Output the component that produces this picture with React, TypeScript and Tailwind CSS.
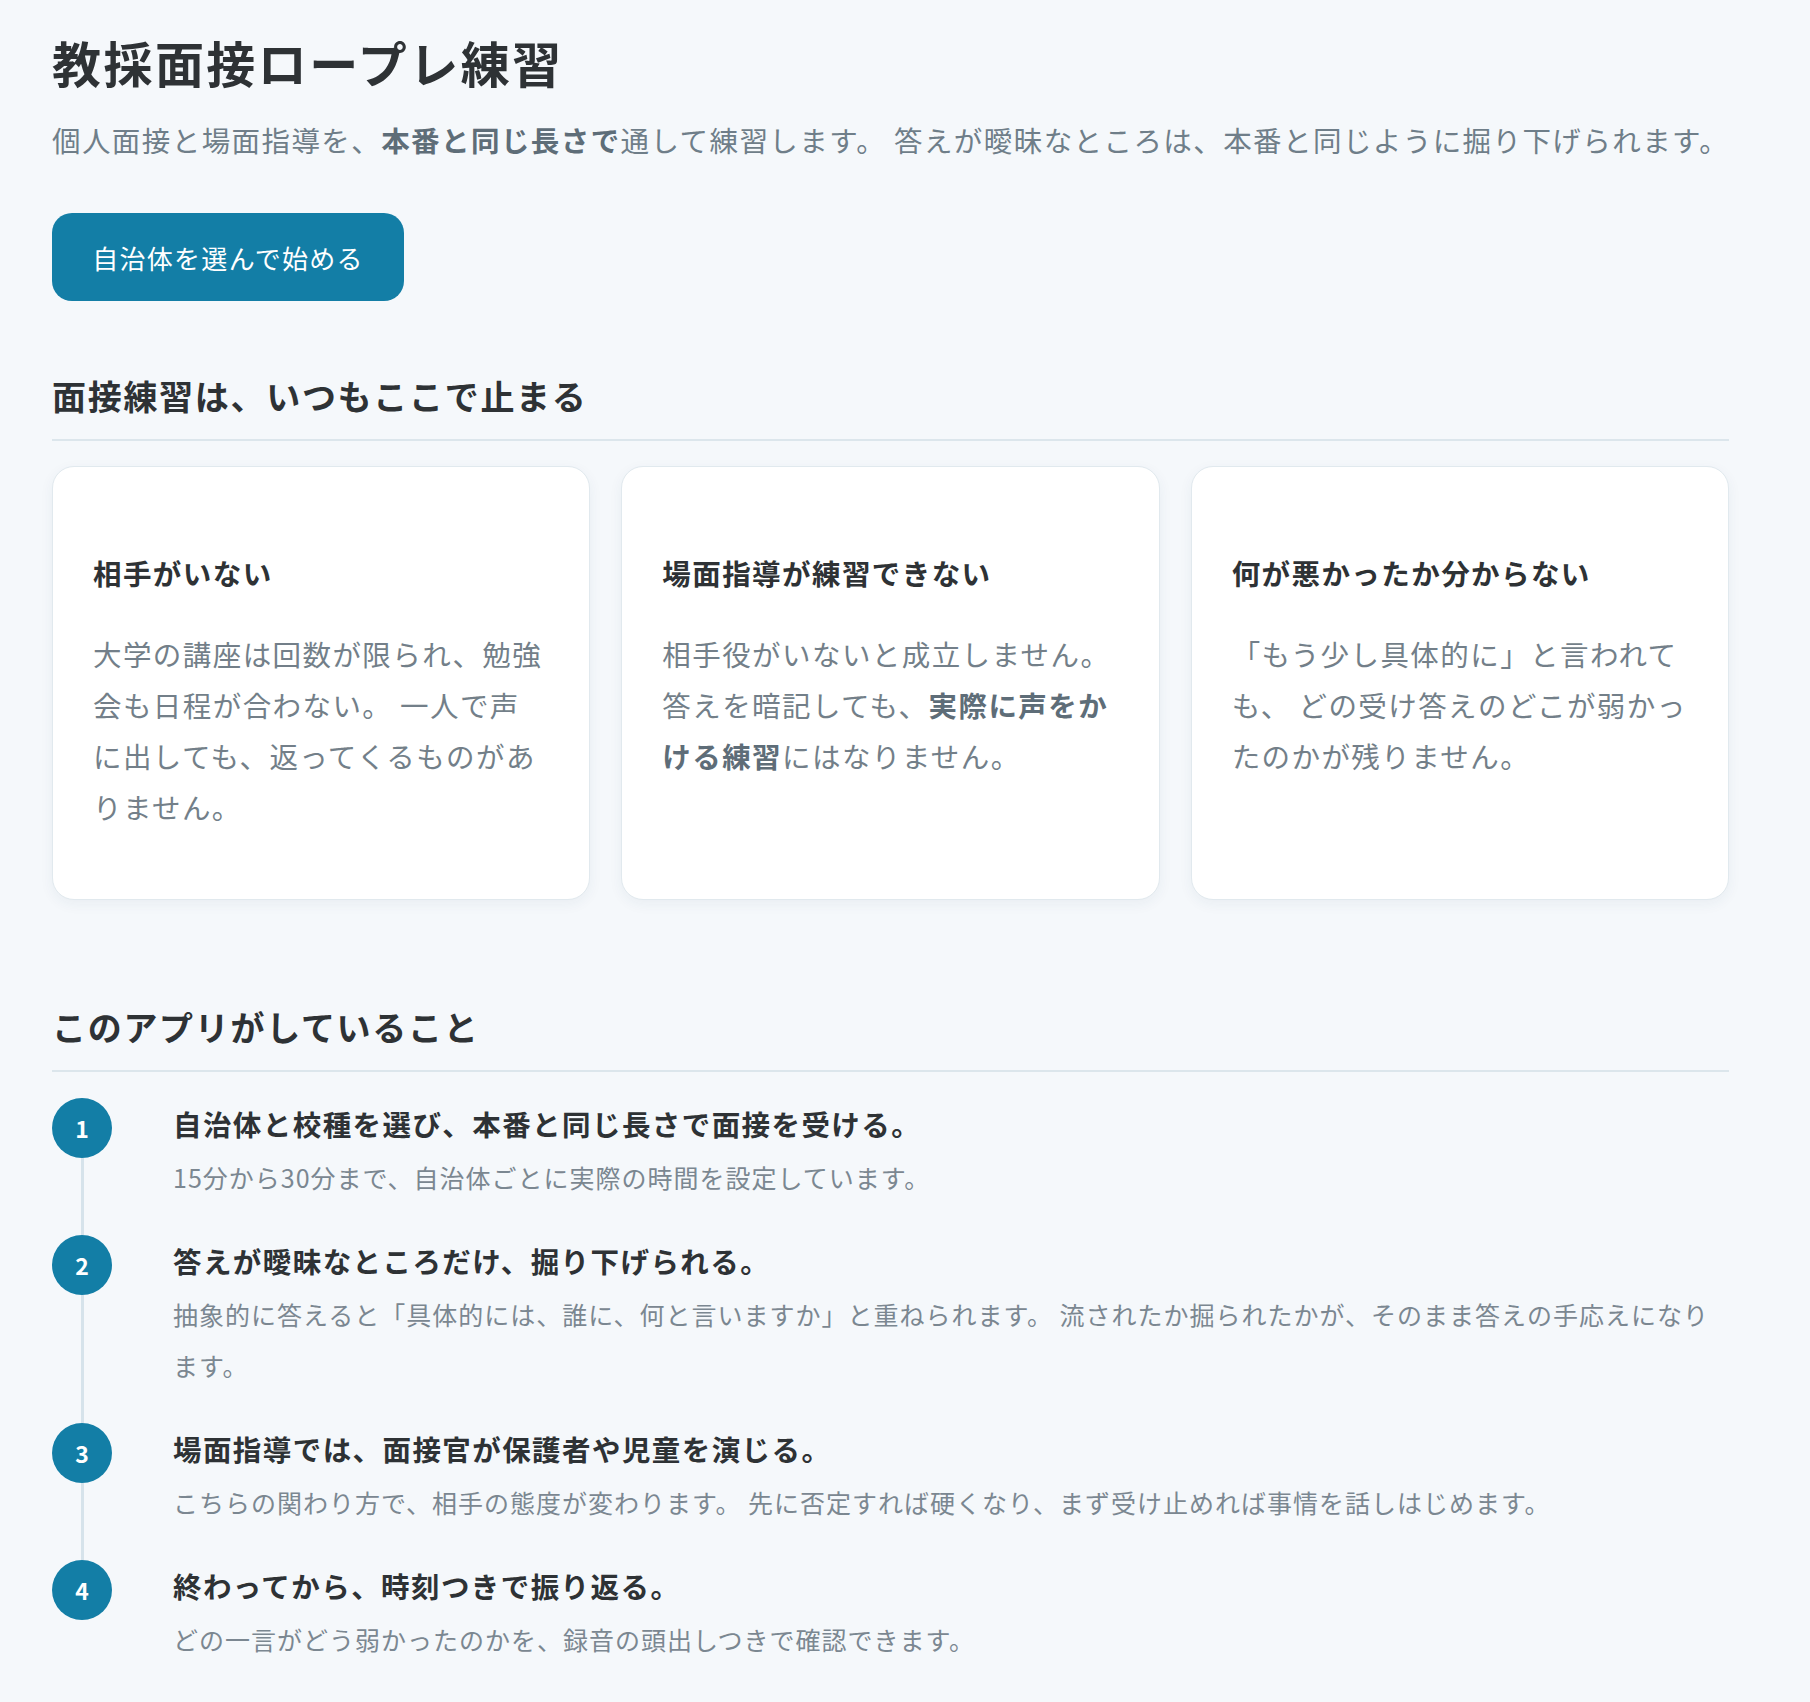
import React from 'react';

const steps = [
    {
        title: '自治体と校種を選び、本番と同じ長さで面接を受ける。',
        body: '15分から30分まで、自治体ごとに実際の時間を設定しています。',
    },
    {
        title: '答えが曖昧なところだけ、掘り下げられる。',
        body: '抽象的に答えると「具体的には、誰に、何と言いますか」と重ねられます。 流されたか掘られたかが、そのまま答えの手応えになります。',
    },
    {
        title: '場面指導では、面接官が保護者や児童を演じる。',
        body: 'こちらの関わり方で、相手の態度が変わります。 先に否定すれば硬くなり、まず受け止めれば事情を話しはじめます。',
    },
    {
        title: '終わってから、時刻つきで振り返る。',
        body: 'どの一言がどう弱かったのかを、録音の頭出しつきで確認できます。',
    },
];

const Card: React.FC<{ title: string; children: React.ReactNode }> = ({ title, children }) => (
    <div className="bg-white border border-[#e1e9ee] rounded-[22px] shadow-[0_4px_14px_rgba(30,70,100,0.06)] px-[40px] pt-[85px] pb-[67px]">
        <h3 className="text-[28.5px] leading-[42px] font-bold tracking-[0.05em] text-[#2e3235]">{title}</h3>
        <p className="mt-[34px] text-[28.5px] leading-[51px] tracking-[0.05em] text-[#737f89] whitespace-nowrap">{children}</p>
    </div>
);

const App: React.FC = () => {
    return (
        <div className="min-h-screen bg-[#f5f8fb] font-['Noto_Sans_CJK_JP',sans-serif]">
            <div className="pl-[52px] pr-[81px] pt-[30px] pb-[38px]">
                {/* hero */}
                <h1 className="text-[49px] leading-[64px] font-bold tracking-[0.05em] text-[#2e3235]">教採面接ロープレ練習</h1>
                <p className="mt-[20px] text-[28.5px] leading-[51px] tracking-[0.05em] text-[#6f7e89] whitespace-nowrap">
                    個人面接と場面指導を、<strong className="font-bold text-[#5e6d78]">本番と同じ長さで</strong>通して練習します。 答えが曖昧なところは、本番と同じように掘り下げられます。
                </p>
                <button className="block mt-[48px] h-[88px] w-[352px] rounded-[20px] bg-[#137ea6] text-white text-[26px] tracking-[0.05em]">
                    自治体を選んで始める
                </button>

                {/* problems */}
                <h2 className="mt-[69px] text-[34px] leading-[51px] font-bold tracking-[0.05em] text-[#2e3235] pb-[18px] border-b-2 border-[#dce6ec]">
                    面接練習は、いつもここで止まる
                </h2>
                <div className="mt-[25px] grid grid-cols-3 gap-[31px]">
                    <Card title="相手がいない">
                        大学の講座は回数が限られ、勉強<br />会も日程が合わない。 一人で声<br />に出しても、返ってくるものがあ<br />りません。
                    </Card>
                    <Card title="場面指導が練習できない">
                        相手役がいないと成立しません。<br />答えを暗記しても、<strong className="font-bold text-[#5e6d78]">実際に声をか<br />ける練習</strong>にはなりません。
                    </Card>
                    <Card title="何が悪かったか分からない">
                        「もう少し具体的に」と言われて<br />も、 どの受け答えのどこが弱かっ<br />たのかが残りません。
                    </Card>
                </div>

                {/* what the app does */}
                <h2 className="mt-[101px] text-[34px] leading-[51px] font-bold tracking-[0.05em] text-[#2e3235] pb-[18px] border-b-2 border-[#dce6ec]">
                    このアプリがしていること
                </h2>
                <ol className="mt-[26px]">
                    {steps.map((s, i) => (
                        <li key={i} className="flex">
                            <div className="w-[60px] flex flex-col items-center shrink-0">
                                <div className="w-[60px] h-[60px] rounded-full bg-[#137ea6] text-white text-[23px] font-bold flex items-center justify-center">
                                    {i + 1}
                                </div>
                                {i < steps.length - 1 && <div className="flex-1 w-[3px] bg-[#d6e3eb]" />}
                            </div>
                            <div className={`flex-1 ml-[61px] pt-[5px] ${i < steps.length - 1 ? 'pb-[32px]' : ''}`}>
                                <h3 className="text-[28.5px] leading-[42px] font-bold tracking-[0.05em] text-[#2e3235]">{s.title}</h3>
                                <p className="mt-[7px] text-[25px] leading-[51px] tracking-[0.04em] text-[#7b8791]">{s.body}</p>
                            </div>
                        </li>
                    ))}
                </ol>
            </div>
        </div>
    );
};

export default App;
